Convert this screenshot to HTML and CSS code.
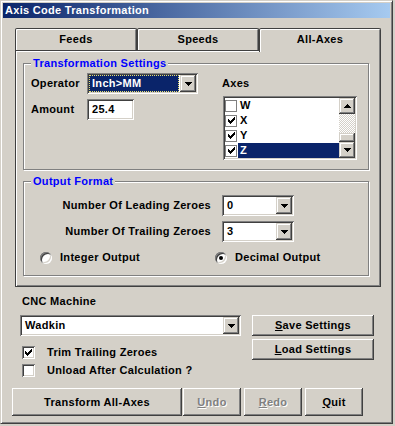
FILE: index.html
```html
<!DOCTYPE html>
<html lang="en">
<head>
<meta charset="UTF-8" />
<title>Axis Code Transformation</title>
<link rel="stylesheet" href="styles.css">
</head>
<body>

<div class="window">
  <div class="titlebar">Axis Code Transformation</div>

  <div class="tabctl">
    <div class="tab-strip">
      <div class="tab">Feeds</div>
      <div class="tab">Speeds</div>
      <div class="tab active">All-Axes</div>
    </div>

    <div class="tab-panel">
      <fieldset class="group">
        <legend>Transformation Settings</legend>
        <div class="settings-body">
          <div class="settings-left">
            <div class="field-row">
              <span class="field-label">Operator</span>
              <div class="combo combo-operator">
                <span class="combo-text focused">Inch&gt;MM</span>
                <span class="combo-btn"><svg width="7" height="4" shape-rendering="crispEdges"><path d="M0 0h7v1h-1v1h-1v1h-1v1h-1v-1h-1v-1h-1v-1h-1z"/></svg></span>
              </div>
            </div>
            <div class="field-row">
              <span class="field-label">Amount</span>
              <div class="textbox amount">25.4</div>
            </div>
          </div>

          <div class="axes">
            <div class="axes-label">Axes</div>
            <div class="listbox">
              <ul class="list-items">
                <li><span class="flat-check"></span><span class="item-text">W</span></li>
                <li><span class="flat-check"><svg width="7" height="7" shape-rendering="crispEdges"><path d="M6 0h1v3h-1zM5 1h1v3h-1zM4 2h1v3h-1zM3 3h1v3h-1zM2 4h1v3h-1zM1 3h1v3h-1zM0 2h1v3h-1z"/></svg></span><span class="item-text">X</span></li>
                <li><span class="flat-check"><svg width="7" height="7" shape-rendering="crispEdges"><path d="M6 0h1v3h-1zM5 1h1v3h-1zM4 2h1v3h-1zM3 3h1v3h-1zM2 4h1v3h-1zM1 3h1v3h-1zM0 2h1v3h-1z"/></svg></span><span class="item-text">Y</span></li>
                <li><span class="flat-check"><svg width="7" height="7" shape-rendering="crispEdges"><path d="M6 0h1v3h-1zM5 1h1v3h-1zM4 2h1v3h-1zM3 3h1v3h-1zM2 4h1v3h-1zM1 3h1v3h-1zM0 2h1v3h-1z"/></svg></span><span class="item-text selected">Z</span></li>
              </ul>
              <div class="vscroll">
                <span class="sb-btn"><svg width="7" height="4" shape-rendering="crispEdges"><path d="M3 0h1v1h1v1h1v1h1v1h-7v-1h1v-1h1v-1h1z"/></svg></span>
                <span class="sb-track"></span>
                <span class="sb-thumb"></span>
                <span class="sb-btn"><svg width="7" height="4" shape-rendering="crispEdges"><path d="M0 0h7v1h-1v1h-1v1h-1v1h-1v-1h-1v-1h-1v-1h-1z"/></svg></span>
              </div>
            </div>
          </div>
        </div>
      </fieldset>

      <fieldset class="group group-output">
        <legend>Output Format</legend>
        <div class="zero-row">
          <span class="zero-label">Number Of Leading Zeroes</span>
          <div class="combo combo-small">
            <span class="combo-text">0</span>
            <span class="combo-btn"><svg width="7" height="4" shape-rendering="crispEdges"><path d="M0 0h7v1h-1v1h-1v1h-1v1h-1v-1h-1v-1h-1v-1h-1z"/></svg></span>
          </div>
        </div>
        <div class="zero-row">
          <span class="zero-label">Number Of Trailing Zeroes</span>
          <div class="combo combo-small">
            <span class="combo-text">3</span>
            <span class="combo-btn"><svg width="7" height="4" shape-rendering="crispEdges"><path d="M0 0h7v1h-1v1h-1v1h-1v1h-1v-1h-1v-1h-1v-1h-1z"/></svg></span>
          </div>
        </div>
        <div class="radio-row">
          <div class="radio-opt opt-integer"><span class="radio"></span>Integer Output</div>
          <div class="radio-opt"><span class="radio checked"></span>Decimal Output</div>
        </div>
      </fieldset>
    </div>
  </div>

  <div class="machine">
    <div class="machine-left">
      <div class="machine-label">CNC Machine</div>
      <div class="combo combo-machine">
        <span class="combo-text">Wadkin</span>
        <span class="combo-btn"><svg width="7" height="4" shape-rendering="crispEdges"><path d="M0 0h7v1h-1v1h-1v1h-1v1h-1v-1h-1v-1h-1v-1h-1z"/></svg></span>
      </div>
      <div class="check-row first">
        <span class="checkbox"><svg width="7" height="7" shape-rendering="crispEdges"><path d="M6 0h1v3h-1zM5 1h1v3h-1zM4 2h1v3h-1zM3 3h1v3h-1zM2 4h1v3h-1zM1 3h1v3h-1zM0 2h1v3h-1z"/></svg></span>
        Trim Trailing Zeroes
      </div>
      <div class="check-row">
        <span class="checkbox"></span>
        Unload After Calculation ?
      </div>
    </div>
    <div class="machine-right">
      <button class="btn btn-settings"><u>S</u>ave Settings</button>
      <button class="btn btn-settings"><u>L</u>oad Settings</button>
    </div>
  </div>

  <div class="actions">
    <button class="btn btn-transform">Transform All-Axes</button>
    <button class="btn btn-small btn-undo" disabled><u>U</u>ndo</button>
    <button class="btn btn-small" disabled><u>R</u>edo</button>
    <button class="btn btn-small"><u>Q</u>uit</button>
  </div>
</div>

</body>
</html>
```

FILE: styles.css
```css
* { box-sizing: border-box; }
body {
  margin: 0;
  background: #d4d0c8;
  color: #000;
  font: bold 11px/13px "Liberation Sans", Arial, sans-serif;
  letter-spacing: 0.3px;
}
.window {
  width: 393px;
  height: 424px;
  padding: 2px;
  background: #d4d0c8;
  border: 1px solid;
  border-color: #d4d0c8 #404040 #404040 #d4d0c8;
  box-shadow: inset 1px 1px #fff, inset -1px -1px #808080;
}
.titlebar {
  height: 15px;
  line-height: 15px;
  padding-left: 2px;
  color: #fff;
  background: linear-gradient(to right, #0a246a, #a6caf0);
}

/* tab control */
.tabctl {
  width: 366px;
  margin: 10px 0 0 12px;
}
.tab-strip {
  display: flex;
  align-items: flex-start;
  height: 22px;
}
.tab {
  width: 122px;
  height: 22px;
  border: 1px solid #404040;
  border-bottom: 0;
  border-radius: 2px 2px 0 0;
  box-shadow: inset 1px 1px #fff, inset -1px 0 #808080;
  text-align: center;
  line-height: 20px;
}
.tab.active {
  height: 24px;
  position: relative;
  z-index: 1;
  background: #d4d0c8;
}
.tab-panel {
  border: 1px solid #404040;
  box-shadow: inset 1px 1px #fff, inset -1px -1px #808080;
  padding: 6px 11px 10px 7px;
}

/* group boxes */
.group {
  margin: 0;
  padding: 3px 7px 9px;
  border: 1px solid #808080;
  box-shadow: inset 1px 1px #fff, 1px 1px #fff;
  min-width: 0;
}
.group legend {
  padding: 0 2px;
  color: #0000ff;
  line-height: 13px;
  background: #d4d0c8;
}
.settings-body { display: flex; }
.settings-left { width: 191px; }
.field-row {
  display: flex;
  align-items: center;
  height: 21px;
}
.field-row + .field-row { margin-top: 5px; }
.field-label { width: 56px; }

.combo, .textbox {
  display: flex;
  height: 21px;
  padding: 2px;
  background: #fff;
  box-shadow: inset 1px 1px #808080, inset -1px -1px #fff, inset 2px 2px #404040, inset -2px -2px #d4d0c8;
}
.combo-text {
  flex: 1;
  padding-left: 3px;
  line-height: 17px;
}
.combo-btn, .sb-btn {
  display: flex;
  align-items: center;
  justify-content: center;
  width: 16px;
  height: 17px;
  background: #d4d0c8;
  box-shadow: inset -1px -1px #404040, inset 1px 1px #d4d0c8, inset -2px -2px #808080, inset 2px 2px #fff;
}
.combo-btn svg, .sb-btn svg { fill: #000; }
.combo-operator { width: 111px; }
.combo-operator .combo-text {
  margin: 0 1px 0 0;
  background: #0a246a;
  color: #fff;
  outline: 1px dotted #e8e070;
  outline-offset: -1px;
}
.amount {
  width: 47px;
  padding-left: 5px;
  line-height: 17px;
}

.axes { padding-top: 4px; }
.listbox {
  display: flex;
  width: 134px;
  height: 64px;
  margin: 6px 0 0 1px;
  padding: 2px;
  background: #fff;
  box-shadow: inset 1px 1px #808080, inset -1px -1px #fff, inset 2px 2px #404040, inset -2px -2px #d4d0c8;
}
.list-items {
  flex: 1;
  margin: 0;
  padding: 0;
  list-style: none;
}
.list-items li {
  display: flex;
  align-items: center;
  height: 15px;
}
.flat-check {
  display: flex;
  align-items: center;
  justify-content: center;
  width: 12px;
  height: 12px;
  margin-right: 1px;
  border: 1px solid #808080;
  background: #fff;
}
.item-text {
  flex: 1;
  height: 15px;
  padding-left: 2px;
  line-height: 15px;
}
.item-text.selected { background: #0a246a; color: #fff; }
.vscroll {
  display: flex;
  flex-direction: column;
  width: 16px;
}
.sb-btn { height: 16px; }
.sb-track {
  flex: 1;
  background: repeating-conic-gradient(#fff 0 25%, #d4d0c8 0 50%) 0 0 / 2px 2px;
}
.sb-thumb {
  height: 9px;
  background: #d4d0c8;
  box-shadow: inset -1px -1px #404040, inset 1px 1px #d4d0c8, inset -2px -2px #808080, inset 2px 2px #fff;
}

.group-output {
  margin-top: 5px;
  padding: 7px 7px 11px;
}
.zero-row {
  display: flex;
  align-items: center;
  height: 21px;
}
.zero-row + .zero-row { margin-top: 5px; }
.zero-label {
  width: 180px;
  margin-right: 11px;
  text-align: right;
}
.combo-small { width: 72px; }
.radio-row {
  display: flex;
  align-items: center;
  height: 13px;
  margin-top: 9px;
  padding-left: 9px;
}
.radio-opt {
  display: flex;
  align-items: center;
}
.opt-integer { width: 175px; }
.radio {
  position: relative;
  width: 12px;
  height: 12px;
  margin-right: 8px;
  border-radius: 50%;
  background: #fff;
  box-shadow: inset 1px 1px #808080, inset -1px -1px #fff, inset 2px 2px #404040, inset -2px -2px #d4d0c8;
}
.radio.checked::after {
  content: "";
  position: absolute;
  left: 4px;
  top: 4px;
  width: 4px;
  height: 4px;
  border-radius: 50%;
  background: #000;
}

/* machine / settings */
.machine {
  display: flex;
  margin-top: 8px;
  padding-left: 17px;
}
.machine-left { width: 221px; }
.machine-label { padding-left: 2px; }
.combo-machine { margin-top: 7px; }
.check-row {
  display: flex;
  align-items: center;
  height: 13px;
  margin-top: 5px;
}
.check-row.first { margin-top: 10px; }
.checkbox {
  display: flex;
  align-items: center;
  justify-content: center;
  width: 13px;
  height: 13px;
  margin: 0 12px 0 2px;
  background: #fff;
  box-shadow: inset 1px 1px #808080, inset -1px -1px #fff, inset 2px 2px #404040, inset -2px -2px #d4d0c8;
}
.machine-right {
  display: flex;
  flex-direction: column;
  gap: 3px;
  margin-left: 11px;
  padding-top: 20px;
}

.btn {
  padding: 0;
  border: 0;
  background: #d4d0c8;
  color: #000;
  font: inherit;
  letter-spacing: inherit;
  box-shadow: inset -1px -1px #404040, inset 1px 1px #fff, inset -2px -2px #808080, inset 2px 2px #d4d0c8;
}
.btn:disabled {
  color: #808080;
  text-shadow: 1px 1px #fff;
}
.btn-settings { width: 122px; height: 21px; }

.actions {
  display: flex;
  gap: 3px;
  margin-top: 11px;
  padding-left: 9px;
}
.actions .btn { height: 28px; }
.btn-transform { width: 170px; }
.btn-small { width: 58px; }
.btn-undo { margin-left: -2px; }
```
